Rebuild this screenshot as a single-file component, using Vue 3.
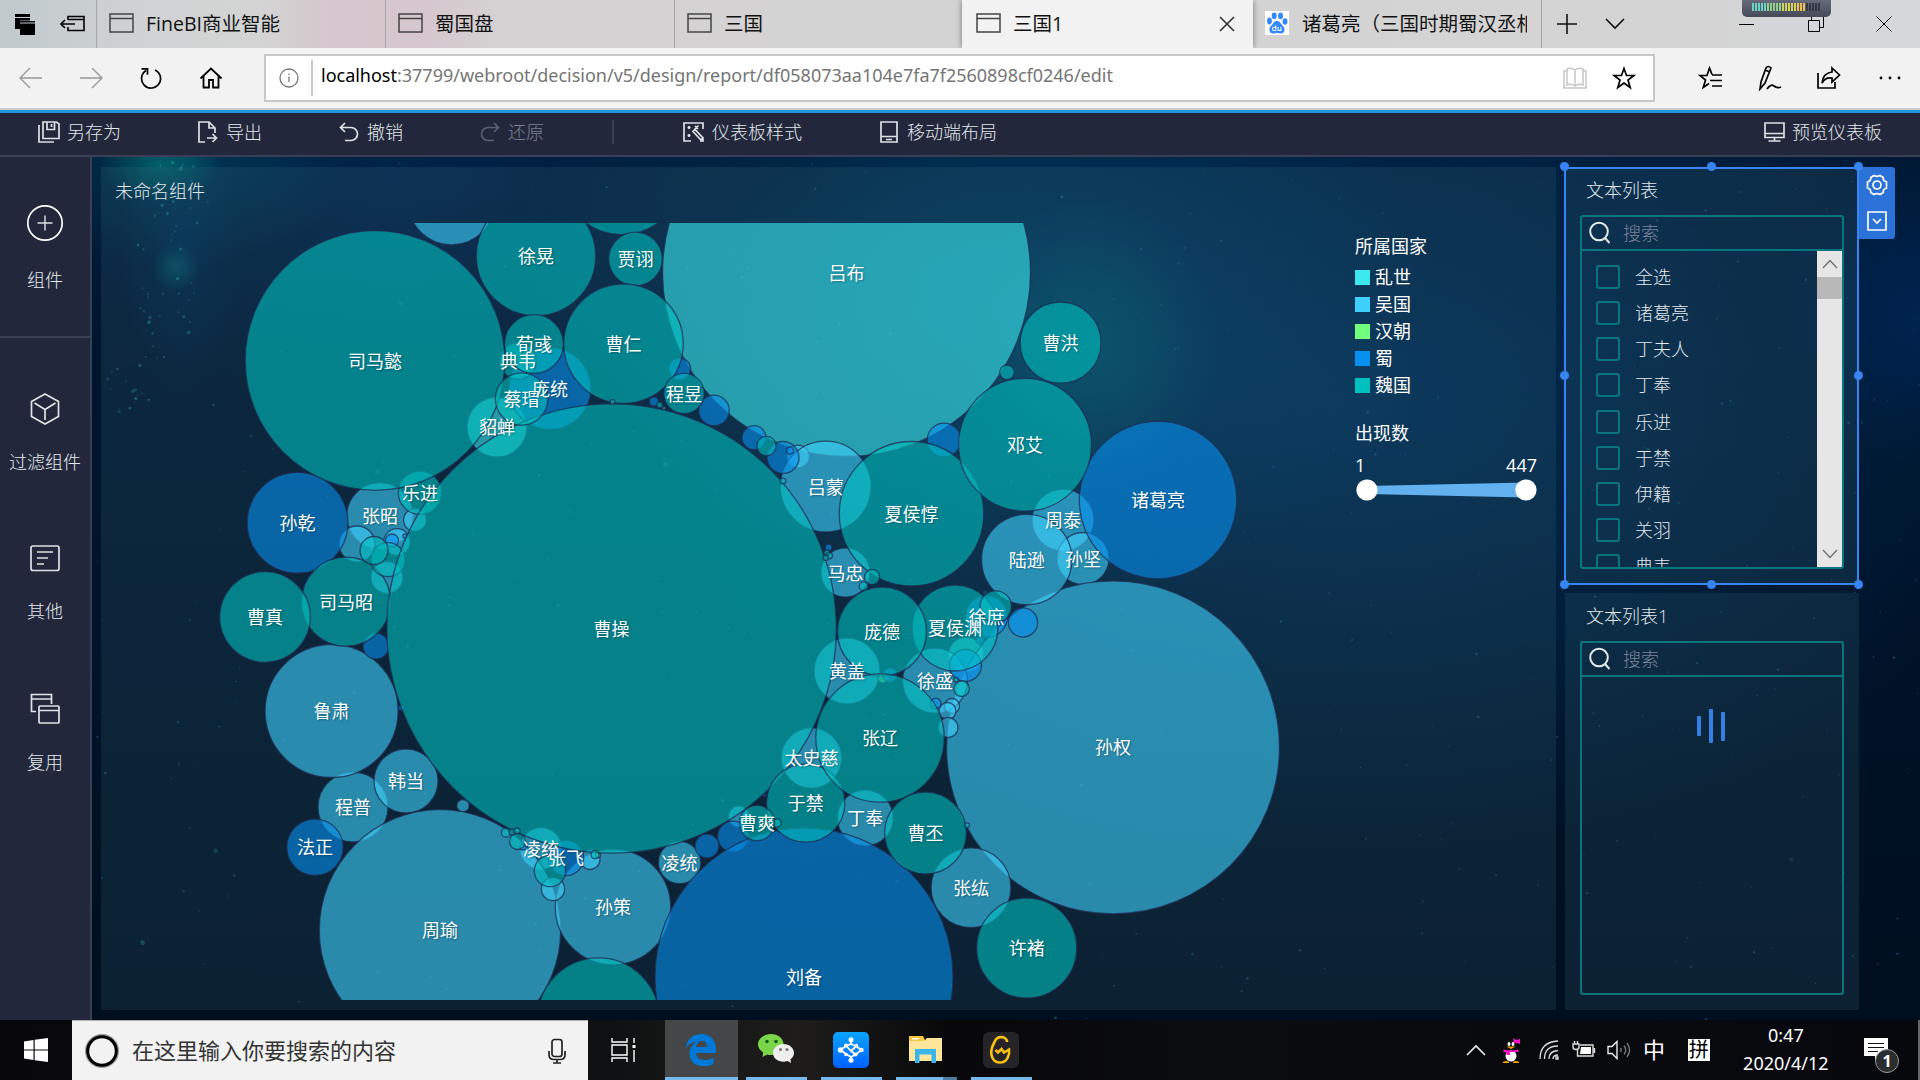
<script setup>
const tabs = [
  { title: 'FineBI商业智能', cls: 't1' },
  { title: '蜀国盘', cls: 't2' },
  { title: '三国', cls: 't3' },
]

const colors = {
  chaos: '#3ae8ee',
  wu: '#3dd0fc',
  han: '#73ff7e',
  shu: '#0790ee',
  wei: '#00bfbf',
}

const legend = [
  { name: '乱世', color: colors.chaos },
  { name: '吴国', color: colors.wu },
  { name: '汉朝', color: colors.han },
  { name: '蜀', color: colors.shu },
  { name: '魏国', color: colors.wei },
]

// [country, cx, cy, r, label]
const bubbles = [
  ['chaos', 846.5, 272.5, 184, '吕布'],
  ['chaos', 497, 427, 30, '貂蝉'],
  ['chaos', 966, 654.5, 17.5],
  ['wu', 451.5, 201.7, 43.3],
  ['wu', 380, 516, 33.3, '张昭'],
  ['wu', 415, 520, 11.4],
  ['wu', 357, 544, 18],
  ['wu', 397, 542, 13.3],
  ['wu', 387, 577.5, 16],
  ['wu', 353, 807, 35, '程普'],
  ['wu', 331.6, 711, 66.5, '鲁肃'],
  ['wu', 406, 781, 32, '韩当'],
  ['wu', 463, 805.7, 6.2],
  ['wu', 541, 848.5, 21, '凌统'],
  ['wu', 440, 930.3, 120.7, '周瑜'],
  ['wu', 613, 907, 57.7, '孙策'],
  ['wu', 553, 889, 11.6],
  ['wu', 590, 859.5, 10],
  ['wu', 798, 456.5, 11.3],
  ['wu', 825.7, 486.5, 45.4, '吕蒙'],
  ['wu', 1063, 520, 31, '周泰'],
  ['wu', 1083, 558.5, 26, '孙坚'],
  ['wu', 845.5, 572.5, 24.6, '马忠'],
  ['wu', 1113, 747.4, 166.5, '孙权'],
  ['wu', 1026.7, 559.5, 45.2, '陆逊'],
  ['wu', 847, 671, 33, '黄盖'],
  ['wu', 935, 680.7, 32.5, '徐盛'],
  ['wu', 952, 706, 7.5],
  ['wu', 947.5, 711, 8.5],
  ['wu', 948, 727.5, 10],
  ['wu', 811.4, 758, 30.2, '太史慈'],
  ['wu', 865.3, 818, 28, '丁奉'],
  ['wu', 971, 887.7, 39.9, '张纮'],
  ['wu', 739, 816.7, 10.8],
  ['wu', 679.6, 862.5, 21.2, '凌统'],
  ['wu', 664, 408, 1.5],
  ['han', 883, 678, 5],
  ['han', 598, 855, 2.5],
  ['shu', 550, 388.5, 41, '庞统'],
  ['shu', 297.5, 522.8, 50.4, '孙乾'],
  ['shu', 392, 540.5, 6.5],
  ['shu', 405, 536, 2],
  ['shu', 376, 646, 13],
  ['shu', 401, 708, 2.5],
  ['shu', 315, 847.3, 28.2, '法正'],
  ['shu', 566, 858, 17.6, '张飞'],
  ['shu', 523, 847, 3],
  ['shu', 1158, 500, 78.7, '诸葛亮'],
  ['shu', 783, 457.5, 16],
  ['shu', 790, 450.5, 3.6],
  ['shu', 754, 437.7, 12],
  ['shu', 714, 410.5, 15.3],
  ['shu', 679.6, 369, 11],
  ['shu', 654, 401.5, 4.5],
  ['shu', 944, 440, 16.8],
  ['shu', 828.6, 547.5, 3.4],
  ['shu', 986.5, 616.5, 21, '徐庶'],
  ['shu', 1023, 622.5, 14.6],
  ['shu', 965.5, 665.5, 16],
  ['shu', 890, 675, 7],
  ['shu', 935.7, 703.5, 5.4],
  ['shu', 980, 640, 4],
  ['shu', 733, 836.5, 15.4],
  ['shu', 707, 846, 11.9],
  ['shu', 804, 977, 149, '刘备'],
  ['shu', 764.5, 795, 1.5],
  ['wei', 518, 361, 18.2, '典韦'],
  ['wei', 420, 492.7, 21.7, '乐进'],
  ['wei', 375, 360.5, 129.8, '司马懿'],
  ['wei', 536, 256, 59.7, '徐晃'],
  ['wei', 622, 173.7, 61],
  ['wei', 635.5, 259, 26.8, '贾诩'],
  ['wei', 623.5, 343.7, 59.7, '曹仁'],
  ['wei', 534, 344, 29.4, '荀彧'],
  ['wei', 346, 601.7, 44.5, '司马昭'],
  ['wei', 265, 617, 45.3, '曹真'],
  ['wei', 388, 559.7, 17],
  ['wei', 374, 550.5, 14],
  ['wei', 611.6, 628.5, 224.7, '曹操'],
  ['wei', 521.6, 399, 26.2, '蔡瑁'],
  ['wei', 550, 871, 15.7],
  ['wei', 595, 854.6, 4],
  ['wei', 506, 832.7, 4.5],
  ['wei', 512, 832, 3],
  ['wei', 517, 831, 3],
  ['wei', 517.5, 841.5, 8],
  ['wei', 598.5, 1018.7, 60.8],
  ['wei', 612.6, 402, 2.4],
  ['wei', 766.5, 446, 9.7],
  ['wei', 684, 393.5, 20.2, '程昱'],
  ['wei', 659.6, 405, 3],
  ['wei', 783, 481, 2.8],
  ['wei', 827, 553, 3],
  ['wei', 829.5, 555.7, 3],
  ['wei', 825.7, 557.7, 2.7],
  ['wei', 1060.6, 342.7, 40.5, '曹洪'],
  ['wei', 1007, 372.3, 7.3],
  ['wei', 911.5, 513.7, 72.2, '夏侯惇'],
  ['wei', 1025, 444.7, 66.4, '邓艾'],
  ['wei', 872, 577, 7.6],
  ['wei', 863.6, 586.3, 4.4],
  ['wei', 955, 628, 43, '夏侯渊'],
  ['wei', 882, 631.5, 44.5, '庞德'],
  ['wei', 995.7, 606.5, 15.7],
  ['wei', 961.6, 688.7, 7.8],
  ['wei', 956, 679.7, 2.3],
  ['wei', 805.7, 803, 39.2, '于禁'],
  ['wei', 880, 738, 64.2, '张辽'],
  ['wei', 925.5, 833, 40.9, '曹丕'],
  ['wei', 967, 825.3, 2.5],
  ['wei', 1026.7, 948, 50, '许褚'],
  ['wei', 777, 823, 4.2],
  ['wei', 757, 823, 17.6, '曹爽'],
].map(([country, x, y, r, label]) => ({ color: colors[country], x, y, r, label }))

const options = ['全选', '诸葛亮', '丁夫人', '丁奉', '乐进', '于禁', '伊籍', '关羽', '典韦']
const grips = [
  [0, 0], [50, 0], [100, 0], [0, 50], [100, 50], [0, 100], [50, 100], [100, 100],
]

// Deterministic star field
let seed = 20200412
const rnd = () => {
  seed = (seed * 1103515245 + 12345) % 2147483648
  return seed / 2147483648
}
const stars = Array.from({ length: 420 }, () => {
  const x = rnd() * 1828
  const y = rnd() * 863
  const s = rnd()
  return { x, y, r: s > 0.98 ? 2.4 : 0.6 + s * 0.8, o: 0.12 + rnd() * 0.32, c: rnd() > 0.45 ? '#1e9a9a' : '#2a72b8' }
})
const plume = Array.from({ length: 60 }, () => {
  const t = rnd()
  return { x: 74 + (rnd() - 0.5) * 60 + (t < 0.25 ? 16 : 0) - (t > 0.7 ? 30 : 0), y: t * 270, r: 0.7 + rnd() * 1.2, o: 0.2 + rnd() * 0.35 }
})
</script>

<template>
  <div class="screen">
    <header class="tabbar">
      <div class="tabtools">
        <svg width="22" height="22" viewBox="0 0 22 22"><path d="M1 1h15v3H1zM1 5h15v2.500H6V16H1zM6 8h15v1.500H6zM6 10.500h15V22H6z" /></svg>
        <svg width="26" height="18" viewBox="0 0 26 18" fill="none" stroke="#000" stroke-width="1.600"><path d="M8 5V1.500h16v14H8V12M8 4.500h16M1 9h14M5 5L1 9l4 4" /></svg>
      </div>
      <div v-for="t in tabs" :key="t.title" class="tab" :class="t.cls">
        <svg width="25" height="20" viewBox="0 0 25 20" fill="none" stroke="#444" stroke-width="1.500"><path d="M1 1h23v18H1zM1 5.500h23" /></svg>
        <span>{{ t.title }}</span>
      </div>
      <div class="tab active">
        <svg width="25" height="20" viewBox="0 0 25 20" fill="none" stroke="#444" stroke-width="1.500"><path d="M1 1h23v18H1zM1 5.500h23" /></svg>
        <span>三国1</span>
        <svg class="close" width="16" height="16" viewBox="0 0 16 16" fill="none" stroke="#333" stroke-width="1.600"><path d="M1 1l14 14M15 1L1 15" /></svg>
      </div>
      <div class="tab last">
        <svg width="24" height="24" viewBox="0 0 24 24"><path fill="#fff" d="M0 0h24v24H0z" /><g fill="#3388ff"><ellipse cx="4.500" cy="10" rx="2.500" ry="3.400" /><ellipse cx="9.200" cy="4.800" rx="2.500" ry="3.400" /><ellipse cx="15.500" cy="4.800" rx="2.500" ry="3.400" /><ellipse cx="20" cy="10.500" rx="2.500" ry="3.300" /><path d="M12 10c3 0 3.500 2.500 6 5 2.800 3 1.500 7.500-2 7.500-1.500 0-2.500-.5-4-.5s-2.500.5-4 .5c-3.500 0-5-4.500-2-7.500 2.500-2.500 3-5 6-5z" /></g><path d="M10.800 14.500v5H9a1.600 1.600 0 0 1 0-3.200h1.800M13 16v2.500q0 1 1 1h2V16" fill="none" stroke="#fff" stroke-width="1.100" /></svg>
        <span>诸葛亮（三国时期蜀汉丞相</span>
      </div>
      <svg class="wplus" width="20" height="20" viewBox="0 0 20 20" stroke="#111" stroke-width="1.600"><path d="M10 0v20M0 10h20" /></svg>
      <svg class="wchev" width="20" height="12" viewBox="0 0 20 12" fill="none" stroke="#111" stroke-width="1.600"><path d="M1 1l9 9 9-9" /></svg>
      <svg class="wmin" width="16" height="16" viewBox="0 0 16 16" stroke="#000"><path d="M0 8.500h15" /></svg>
      <svg class="wmax" width="16" height="16" viewBox="0 0 16 16" fill="none" stroke="#000"><path d="M.5 4.500h11v11H.5zM3.500 4V.5h12v11H12" /></svg>
      <svg class="wclose" width="16" height="16" viewBox="0 0 16 16" stroke="#000"><path d="M.5.5l15 15M15.500.5l-15 15" /></svg>
      <div class="meter"><i v-for="n in 23" :key="n" :class="{ off: n > 18 }" /></div>
    </header>

    <div class="navbar">
      <svg width="24" height="22" viewBox="0 0 24 22" fill="none" stroke="#999" stroke-width="1.400"><path d="M23 11H1M11 1L1 11l10 10" /></svg>
      <svg width="24" height="22" viewBox="0 0 24 22" fill="none" stroke="#999" stroke-width="1.400"><path d="M1 11h22M13 1l10 10-10 10" /></svg>
      <svg width="24" height="22" viewBox="0 0 24 22" fill="none" stroke="#000" stroke-width="1.700"><path d="M7 3.500a9.500 9.500 0 1 0 9 -.6M2.500 1.800h6v6" /></svg>
      <svg width="24" height="22" viewBox="0 0 24 22" fill="none" stroke="#000" stroke-width="1.800"><path d="M1.500 11.500L12 1.500l10.500 10M4.500 9v11.500H10V13h4v7.500h5.500V9" /></svg>
      <div class="address">
        <svg width="20" height="20" viewBox="0 0 20 20" fill="none" stroke="#777" stroke-width="1.300"><circle cx="10" cy="10" r="9" /><path d="M10 8.500V14M10 5.500v1.600" /></svg>
        <i class="bar" />
        <span class="url"><b>localhost</b>:37799/webroot/decision/v5/design/report/df058073aa104e7fa7f2560898cf0246/edit</span>
        <svg width="24" height="22" viewBox="0 0 24 22" fill="none" stroke="#c6c6c6" stroke-width="1.500"><path d="M12 3q-4-3-8-1v16q4-2 8 1 4-3 8-1V2q-4-2-8 1v16M4 4H1v17h22V4h-3" /></svg>
        <svg width="24" height="24" viewBox="0 0 24 24" fill="none" stroke="#000" stroke-width="1.700"><path d="M12 2.500l2.500 7H22l-6 4.500 2.200 7.500L12 17l-6.200 4.500L8 14 2 9.500h7.500z" /></svg>
      </div>
      <div class="navright">
        <svg width="26" height="24" viewBox="0 0 26 24" fill="none" stroke="#000" stroke-width="1.700"><path d="M14 8.500l-2.500-6.500L9 9.500H2L7.500 14l-2.200 7.500L11 17.500M14 9h10M12 14.500h12M14 20h10" /></svg>
        <svg width="26" height="26" viewBox="0 0 26 26" fill="none" stroke="#000" stroke-width="1.700"><path d="M3 24L4 17 9 3q2-3 5 0L8 18zM8 5l5 2M3 24l5-6M10 24q4-5.500 7-3t7 1" /></svg>
        <svg width="26" height="24" viewBox="0 0 26 24" fill="none" stroke="#000" stroke-width="1.700"><path d="M2 7v15h17v-6M16 2l7.500 7L16 16v-4Q9 11 6 17 7 7 16 6z" /></svg>
        <svg width="24" height="4" viewBox="0 0 24 4"><circle cx="3" cy="2" r="1.400" /><circle cx="12" cy="2" r="1.400" /><circle cx="21" cy="2" r="1.400" /></svg>
      </div>
    </div>

    <div class="toolbar">
      <div class="tool a1"><svg width="22" height="22" viewBox="0 0 22 22"><path d="M5 1h13.500l2.500 2v14.500H5zM9 1v7.500h7.500V1M13.500 3v3M1 4v17h15" /></svg>另存为</div>
      <div class="tool a2"><svg width="20" height="22" viewBox="0 0 20 22"><path d="M7 21H1V1h10l6 6v5M11 1v6h6M9 17h9M14.500 13l4 4-4 4" /></svg>导出</div>
      <div class="tool a3"><svg width="20" height="20" viewBox="0 0 20 20"><path d="M6 1L1.500 5.500 6 10M2 5.500h10a6.500 6.500 0 0 1 0 13H6" /></svg>撤销</div>
      <div class="tool a4 off"><svg width="20" height="20" viewBox="0 0 20 20"><path d="M14 1l4.500 4.500L14 10M18 5.500H8a6.500 6.500 0 0 0 0 13h6" /></svg>还原</div>
      <i class="vsep" />
      <div class="tool a5"><svg width="21" height="20" viewBox="0 0 21 20"><path d="M8 19H1V1h19v6M20 17v2h-3M10 9.500l8 8.500 2-2-8-8.500zM4.500 5.500h3M6 4v3M12 4l3 3M15.500 3.500l-4 4M4.500 13.500h3M6 12v3" /></svg>仪表板样式</div>
      <div class="tool a6"><svg width="18" height="22" viewBox="0 0 18 22"><path d="M1 1h16v20H1zM1 15.500h16M6 18.500h6" /></svg>移动端布局</div>
      <div class="tool a7"><svg width="21" height="20" viewBox="0 0 21 20"><path d="M1 1h19v14.500H1zM1 11.500h19M10.500 15.500v3M4.500 19h12" /></svg>预览仪表板</div>
    </div>

    <div class="body">
      <nav class="side">
        <div class="sitem first">
          <svg width="40" height="40" viewBox="0 0 40 40"><circle cx="20" cy="20" r="17.200" stroke="#fff" /><path d="M20 12.500v15M12.500 20h15" stroke-width="1.400" /></svg>
          <span>组件</span>
        </div>
        <div class="sitem s2">
          <svg width="40" height="40" viewBox="0 0 40 40"><path d="M20 5l13.500 7.500v15L20 35 6.500 27.500v-15zM9.500 14L20 20.500 30.500 14M20 20.500V31" /></svg>
          <span>过滤组件</span>
        </div>
        <div class="sitem s3">
          <svg width="40" height="40" viewBox="0 0 40 40"><rect x="6" y="8" width="28" height="24.500" rx="2" /><path d="M12 14h16M12 20h11M12 26h7" /></svg>
          <span>其他</span>
        </div>
        <div class="sitem s4">
          <svg width="40" height="40" viewBox="0 0 40 40"><rect x="14" y="17" width="20" height="17" rx="1" /><path d="M14 21.500h20M11 22.500H6.500v-17h20V15M6.500 10h20" /></svg>
          <span>复用</span>
        </div>
      </nav>

      <main class="canvas">
        <svg class="sky" viewBox="0 0 1828 863" width="1828" height="863">
          <circle v-for="(s, i) in stars" :key="i" :cx="s.x" :cy="s.y" :r="s.r" :fill="s.c" :opacity="s.o" />
          <circle v-for="(s, i) in plume" :key="'p' + i" :cx="s.x" :cy="s.y" :r="s.r" fill="#1c9c88" :opacity="s.o" />
        </svg>
        <section class="panel chart">
          <h3>未命名组件</h3>
          <div class="chartbody">
            <svg class="plot" viewBox="101 223 1200 777" width="1200" height="777">
              <circle v-for="(b, i) in bubbles" :key="i" :cx="b.x" :cy="b.y" :r="b.r" :fill="b.color" fill-opacity=".6" stroke="#1d2c50" stroke-opacity=".75" stroke-width="1.300" />
              <g class="names">
                <template v-for="(b, i) in bubbles" :key="'n' + i">
                  <text v-if="b.label" :x="b.x" :y="b.y + 7">{{ b.label }}</text>
                </template>
              </g>
            </svg>
            <aside class="legend">
              <div class="ltitle">所属国家</div>
              <div v-for="l in legend" :key="l.name" class="lrow"><i :style="{ background: l.color }" />{{ l.name }}</div>
              <div class="ltitle second">出现数</div>
              <div class="range"><span>1</span><span>447</span></div>
              <svg width="184" height="24" viewBox="0 0 184 24"><path d="M12 8l160-3.500v15L12 16z" fill="#64b1f0" /><circle cx="12" cy="12" r="10.600" fill="#fff" /><circle cx="171" cy="12" r="10.600" fill="#fff" /></svg>
            </aside>
          </div>
        </section>

        <div class="lists">
          <section class="panel list selected">
            <h3>文本列表</h3>
            <div class="box">
              <div class="search">
                <svg width="22" height="24" viewBox="0 0 22 24" fill="none" stroke="#e3e8e8" stroke-width="2"><circle cx="10" cy="10.500" r="8.800" /><path d="M15.500 16.500l5 5.500" /></svg><span>搜索</span>
              </div>
              <div class="rows">
                <div class="opts">
                  <div v-for="o in options" :key="o" class="opt"><i /><span>{{ o }}</span></div>
                </div>
                <div class="scroll">
                  <svg width="16" height="10" viewBox="0 0 16 10"><path d="M1 9l7-7.500L15 9" /></svg>
                  <b />
                  <svg class="down" width="16" height="10" viewBox="0 0 16 10"><path d="M1 1l7 7.500L15 1" /></svg>
                </div>
              </div>
            </div>
            <i v-for="(g, i) in grips" :key="i" class="grip" :style="{ left: g[0] + '%', top: g[1] + '%' }" />
            <div class="actions">
              <svg width="22" height="22" viewBox="0 0 22 22"><path d="M8 1.500q3 1.800 6 0l3.200 2q-.2 3.500 3.300 4.500v6q-3.500 1-3.300 4.500l-3.200 2q-3-1.800-6 0l-3.200-2Q5 15 1.500 14V8Q5 7 4.800 3.500z" /><circle cx="11" cy="11" r="4" /></svg>
              <svg width="20" height="20" viewBox="0 0 20 20"><path d="M1 1h18v18H1zM6 8l4 4 4-4" /></svg>
            </div>
          </section>
          <section class="panel list">
            <h3>文本列表1</h3>
            <div class="box">
              <div class="search">
                <svg width="22" height="24" viewBox="0 0 22 24" fill="none" stroke="#e3e8e8" stroke-width="2"><circle cx="10" cy="10.500" r="8.800" /><path d="M15.500 16.500l5 5.500" /></svg><span>搜索</span>
              </div>
              <div class="loading"><i class="l1" /><i class="l2" /><i class="l3" /></div>
            </div>
          </section>
        </div>
      </main>
    </div>

    <footer class="taskbar">
      <div class="start"><svg width="24" height="24" viewBox="0 0 24 24" fill="#fff"><path d="M0 3.500l9.500-1.500v9.500H0zM10.700 1.800L24 0v11.500H10.700zM0 12.500h9.500V22L0 20.500zM10.700 12.500H24V24l-13.300-1.800z" /></svg></div>
      <div class="find">
        <svg width="36" height="36" viewBox="0 0 36 36" fill="none"><circle cx="18" cy="18" r="15.800" stroke="#999" stroke-width="2.500" /><circle cx="18" cy="18" r="14.300" stroke="#000" stroke-width="3" /></svg>
        <span>在这里输入你要搜索的内容</span>
        <svg class="mic" width="18" height="26" viewBox="0 0 18 26" fill="none" stroke="#222" stroke-width="1.700"><rect x="4" y="1.500" width="10" height="17" rx="2.500" /><path d="M1 13v4q0 4.500 5 4.500h6q5 0 5-4.500v-4M9 21.500V25M5 25h8" /></svg>
      </div>
      <svg class="tv" width="26" height="24" viewBox="0 0 26 24" fill="none" stroke="#fff" stroke-width="1.400"><path d="M1 0v4h15V0M1 7h15v10H1zM1 24v-4h15v4M23 0v5M23 12v12" /><path d="M21.500 7h3v3h-3z" fill="#fff" stroke="none" /></svg>
      <div class="app edge"><svg width="32" height="34" viewBox="0 0 32 34"><path fill="#0078d7" d="M1 15C2 6 8 1 16.500 1 26 1 31 8 31 16v4H11c.5 5 4 7 9 7 3.500 0 6-1 8.500-2.500V31c-3 1.600-6 2.300-10 2.300C10 33.300 4.500 28 4.500 20.500c0-5.500 3-9.500 7.500-12C6.500 9.500 3 11.500 1 15zM11.200 14H22c0-4-2-6-5.200-6-3 0-5.100 2.500-5.600 6z" /></svg></div>
      <div class="app"><svg width="36" height="34" viewBox="0 0 36 34"><path fill="#7bd54a" d="M13 1c7 0 12.500 4.500 12.500 10.500S20 22 13 22c-1.500 0-3-.2-4-.6L4.500 24l.7-4.500C2.400 17.600 0 15 0 11.500 0 5.500 6 1 13 1z" /><circle cx="9" cy="8.500" r="1.800" fill="#176017" /><circle cx="18" cy="8.500" r="1.800" fill="#176017" /><path fill="#eee" d="M25.500 11C31.500 11 36 15 36 20c0 2.500-1.500 5-3.500 6.300l.5 3.700-3.300-1.900c-1.300.5-2.700.7-4.200.7-6 0-10.500-4-10.500-8.800s4.500-9 10.500-9z" /><circle cx="22.500" cy="16.500" r="1.500" fill="#777" /><circle cx="29" cy="16.500" r="1.500" fill="#777" /></svg></div>
      <div class="app"><svg width="36" height="36" viewBox="0 0 36 36"><defs><linearGradient id="ding" x2="0" y2="1"><stop stop-color="#0aa5ff" /><stop offset="1" stop-color="#0060ff" /></linearGradient></defs><rect width="36" height="36" rx="5" fill="url(#ding)" /><path d="M17.500 8l.5 4-5 2-5.500 4 5.500 4 5 3v3M18 12l5.500 2.500L28.500 18l-6 4.500-4.500 2.500M13 13.500l5 5.500 4.500 3.500M23.500 14l-5.500 5" fill="none" stroke="#fff" stroke-width="1.800" /><g fill="#fff"><circle cx="18" cy="7.800" r="2.500" /><circle cx="7.500" cy="18" r="2.700" /><circle cx="28.500" cy="18" r="2.200" /><circle cx="18" cy="28.200" r="2.500" /><circle cx="13" cy="13.500" r="2" /><circle cx="23.500" cy="13.500" r="1.700" /><circle cx="22.500" cy="22.500" r="2.100" /><circle cx="13" cy="22.500" r="1.800" /></g></svg></div>
      <div class="app folder"><svg width="34" height="28" viewBox="0 0 34 28"><path fill="#f9c83c" d="M0 0h14l2 4v4H0z" /><path fill="#fff" d="M3 2h7v1.500H3z" /><path fill="#ffe69a" d="M0 5h15l3-3h15v23H0z" /><path fill="#3cb4ec" d="M6 13h21v14h-4.500v-8.500h-12V27H6z" /></svg></div>
      <div class="app"><svg width="36" height="36" viewBox="0 0 36 36"><rect width="36" height="36" rx="6" fill="#262427" /><path d="M24 10c0-6-10-7-12.500 0C7.500 17 7.500 22 9.500 26c3 6 12 6 15 0 1.700-3 2-5.500 1.500-8.500l-5 3-2.500-3.500L15 20.500l-2.500-2.500" fill="none" stroke="#f9c013" stroke-width="2.600" /></svg></div>
      <div class="tray">
        <svg width="20" height="12" viewBox="0 0 20 12" fill="none" stroke="#eee" stroke-width="1.600"><path d="M1 11l9-9 9 9" /></svg>
        <svg width="20" height="25" viewBox="0 0 20 25"><path d="M10 2c5 0 6 4 6 7 2 3 3 6 2 10H2c-1-4 0-7 2-10 0-3 1-7 6-7z" fill="#111" /><ellipse cx="10" cy="18" rx="5.500" ry="5.500" fill="#fff" /><ellipse cx="8" cy="6" rx="1.400" ry="2" fill="#fff" /><ellipse cx="12" cy="6" rx="1.400" ry="2" fill="#fff" /><path d="M5.500 8.500h9L10 11z" fill="#f5a000" /><path d="M2.500 11.500q7.500 2 15 0v2.500H9v3H5.500v-3h-3zM12 0l3 2 4-1v5l-3-1-3 0z" fill="#ff10d0" /><path d="M2 24q3-2 6 0v1H2zM12 24q3-2 6 0v1h-6z" fill="#f5a000" /></svg>
        <svg width="20" height="20" viewBox="0 0 20 20" fill="none" stroke="#ddd" stroke-width="1.300"><path d="M1 19Q1 2 19 1M5.500 19q0-13 13.500-13M10 19q0-8 9-8.500" /><path d="M14 19q0-4 5-4M17 17h2v2h-2z" /></svg>
        <svg width="24" height="18" viewBox="0 0 24 18" fill="none" stroke="#ddd" stroke-width="1.400"><path d="M8 4h13v11H5.500V9M22.500 7v5M1 3h6v3q0 2.500-3 2.500T1 6zM2.500 0v3M5.500 0v3" /><path d="M9 6h10v7H8z" fill="#fff" stroke="none" /></svg>
        <svg width="24" height="20" viewBox="0 0 24 20" fill="none" stroke="#eee" stroke-width="1.400"><path d="M1 6.500h4l5-5v17l-5-5H1z" /><path d="M13.500 8q1.500 2 0 4M17 5.500q3.500 4.500 0 9M20 3q5 7 0 14" stroke="#777" /></svg>
        <span class="zh">中</span>
        <span class="pin">拼</span>
        <div class="clock"><span>0:47</span><span>2020/4/12</span></div>
        <div class="note">
          <svg width="24" height="24" viewBox="0 0 24 24"><path d="M0 0h24v18H16l-5 5.500V18H0z" fill="#fff" /><path d="M4 5.500h16M4 9.500h16M4 13.500h10" stroke="#111" stroke-width="1.200" /></svg>
          <b>1</b>
        </div>
      </div>
    </footer>
  </div>
</template>

<style>
body { margin: 0; background: #000; }
</style>

<style scoped>
.screen { width: 1920px; height: 1080px; overflow: hidden; display: flex; flex-direction: column; font-family: "Open Sans", "Noto Sans CJK SC", sans-serif; font-size: 18px; font-weight: 300; color: #e3e8ea; }
.screen * { box-sizing: border-box; }
svg { flex: none; display: block; }
i, b { font-style: normal; }

.tabbar { position: relative; height: 48px; flex: none; display: flex; align-items: center; color: #111; font-size: 19.500px; font-weight: 400; background: linear-gradient(90deg, #bfc9cd 0, #cfd2d3 130px, #d4d4d4 260px, #d5c7cd 330px, #d6c6cd 420px, #d4d2d3 500px, #d4d4d4 1700px, #d5d8db); }
.tabtools { width: 96px; display: flex; align-items: center; gap: 24px; padding-left: 14px; }
.tab { height: 48px; width: 289px; flex: none; border-left: 1px solid #a5a5a5; display: flex; align-items: center; padding: 0 0 0 12px; gap: 12px; overflow: hidden; white-space: nowrap; line-height: 48px; }
.tab svg { margin-top: -2px; }
.active { background: #f2f2f2; border: 0; width: 291px; padding-left: 14px; box-shadow: 0 0 6px rgba(0, 0, 0, .45); clip-path: inset(0 -8px); overflow: visible; }
.t3 { width: 288px; }
.active .close { margin-left: auto; margin-right: 18px; margin-top: 0; }
.last { border-left: 0; border-right: 1px solid #a5a5a5; padding: 0 14px 0 12px; gap: 13px; }
.last span { overflow: hidden; }
.wplus { margin-left: 15px; }
.wchev { margin-left: 28px; }
.wmin { margin-left: 114px; }
.wmax { margin-left: 53px; }
.wclose { margin-left: 52px; }
.meter { position: absolute; left: 1742px; top: 0; width: 89px; height: 17px; border-radius: 0 0 5px 5px; background: linear-gradient(#656b7c, #454a58); display: flex; gap: 1px; padding: 3px 10px 4px; }
.meter i { width: 2px; height: 8px; background: #6bd3c3; }
.meter i:nth-child(n+6) { background: #8fd08a; }
.meter i:nth-child(n+11) { background: #d4d05c; }
.meter i:nth-child(n+16) { background: #eebb50; }
.meter i.off { background: #343846; }

.navbar { height: 62px; flex: none; background: #f2f2f2; border-bottom: 2px solid #c9cccd; display: flex; align-items: center; padding-left: 19px; gap: 36px; }
.address { width: 1391px; height: 48px; margin-left: 5px; margin-right: 7px; border: 2px solid #c8c8c8; background: #fff; display: flex; align-items: center; padding: 0 17px 0 13px; }
.bar { width: 2px; height: 36px; background: #c8c8c8; margin: 0 8px 0 12px; }
.url { flex: 1; font-family: "Noto Sans", "Open Sans", sans-serif; font-weight: 400; font-size: 18px; color: #757575; letter-spacing: -.01px; position: relative; top: -3px; white-space: nowrap; }
.url b { font-weight: 400; color: #000; }
.address svg:last-child { margin-left: 25px; }
.navright { display: flex; align-items: center; gap: 33px; }
.navright svg:last-child { margin-left: 3px; }

.toolbar { height: 47px; flex: none; background: #22273c; border-top: 3px solid #2196dc; border-bottom: 2px solid #3a3f56; display: flex; align-items: center; padding-bottom: 4px; }
.tool { display: flex; align-items: center; gap: 7px; line-height: 24px; white-space: nowrap; }
.tool svg { fill: none; stroke: #dde2e2; stroke-width: 1.700; }
.off { color: #7b8093; }
.off svg { stroke: #5a6074; }
.a1 { margin-left: 38px; }
.a2 { margin-left: 77px; gap: 8px; }
.a3 { margin-left: 77px; gap: 8px; }
.a4 { margin-left: 77px; gap: 8px; }
.vsep { width: 2px; height: 24px; background: #3a3f56; margin-left: 68px; }
.a5 { margin-left: 69px; gap: 8px; }
.a6 { margin-left: 78px; gap: 9px; }
.a7 { margin-left: auto; margin-right: 38px; }

.body { flex: 1; min-height: 0; display: flex; }
.side { width: 92px; background: #22273c; border-right: 2px solid #3a3f56; display: flex; flex-direction: column; flex: none; }
.sitem { display: flex; flex-direction: column; align-items: center; gap: 21px; line-height: 24px; white-space: nowrap; }
.sitem svg { fill: none; stroke: #dfe4e2; stroke-width: 1.700; }
.first { height: 181px; padding-top: 46px; gap: 25px; border-bottom: 2px solid #3a3f56; }
.s2 { margin-top: 51px; }
.s3 { margin-top: 64px; }
.s4 { margin-top: 66px; }

.canvas { position: relative; flex: 1; display: flex; gap: 9px; padding: 10px 0 10px 9px; align-items: stretch; background:
  radial-gradient(ellipse 60px 38px at 68px 8px, rgba(0, 130, 125, .55), transparent),
  radial-gradient(ellipse 170px 110px at 90px 0, rgba(0, 90, 110, .4), transparent),
  radial-gradient(ellipse 24px 24px at 84px 110px, rgba(0, 130, 130, .4), transparent),
  radial-gradient(ellipse 60px 150px at 90px 90px, rgba(0, 60, 110, .3), transparent),
  radial-gradient(ellipse 130px 150px at 1000px 190px, rgba(0, 125, 125, .36), transparent),
  radial-gradient(ellipse 460px 330px at 880px 140px, rgba(0, 80, 120, .5), transparent),
  radial-gradient(ellipse 700px 450px at 1260px 250px, rgba(0, 60, 110, .6), transparent),
  radial-gradient(ellipse 160px 150px at 1840px 160px, rgba(0, 60, 150, .3), transparent),
  radial-gradient(ellipse 420px 220px at 300px 20px, rgba(0, 50, 100, .45), transparent),
  linear-gradient(#001834, #001328 50%, #000f20); }
.sky { position: absolute; left: 0; top: 0; }
.panel { position: relative; background: rgba(60, 110, 130, .2); }
.panel h3 { margin: 0; font-size: 18px; font-weight: 300; line-height: 24px; }
.chart { width: 1455px; flex: none; display: flex; flex-direction: column; }
.chart h3 { padding: 12px 0 0 14px; height: 56px; }
.chartbody { display: flex; }
.names text { fill: #fff; font-size: 18px; font-weight: 400; text-anchor: middle; text-shadow: 1px 1px 2px rgba(0, 40, 60, .4); }
.legend { margin-left: 54px; padding-top: 11px; color: #fff; width: 184px; font-weight: 400; }
.ltitle { line-height: 24px; margin-bottom: 6px; }
.lrow { display: flex; align-items: center; gap: 5px; height: 27px; line-height: 27px; }
.lrow i { width: 15px; height: 15px; }
.second { margin: 22px 0 0; }
.range { display: flex; justify-content: space-between; line-height: 24px; padding: 0 2px 0 0; margin: 8px 0 1px; }

.lists { display: flex; flex-direction: column; gap: 8px; width: 294px; }
.list { height: 418px; padding: 48px 15px 0; }
.list h3 { position: absolute; left: 21px; top: 11px; }
.list + .list { height: 417px; }
.selected::after { content: ""; position: absolute; inset: 0 0 0 -1px; border: 2px solid #3685f2; pointer-events: none; }
.box { height: 354px; border: 2px solid #08757f; border-radius: 3px; display: flex; flex-direction: column; overflow: hidden; }
.search { height: 34px; flex: none; border-bottom: 2px solid #08757f; display: flex; align-items: center; padding-left: 7px; gap: 12px; color: #7f8398; }
.search span, .opt span { position: relative; top: -1px; }
.rows { flex: 1; min-height: 0; display: flex; }
.opts { flex: 1; padding: 8px 0 0 14px; overflow: hidden; }
.opt { height: 36.150px; display: flex; align-items: center; gap: 15px; }
.opt i { width: 24px; height: 24px; border: 2px solid #08757f; border-radius: 3px; }
.scroll { width: 25px; background: #e6e6e6; display: flex; flex-direction: column; align-items: center; padding: 8px 0; }
.scroll svg { fill: none; stroke: #707070; stroke-width: 1.300; }
.scroll b { width: 25px; height: 22px; background: #b8b8b8; margin-top: 8px; }
.scroll .down { margin-top: auto; }
.grip { position: absolute; width: 9px; height: 9px; border-radius: 50%; background: #3685f2; margin: -5px 0 0 -5px; z-index: 2; }
.actions { position: absolute; left: 294px; top: 0; width: 36px; height: 72px; border-radius: 0 3px 3px 0; background: #2a72d8; display: flex; flex-direction: column; align-items: center; gap: 15px; padding-top: 7px; }
.actions svg { fill: none; stroke: #fff; stroke-width: 1.700; }
.loading { display: flex; justify-content: center; align-items: center; gap: 8px; height: 34px; margin-top: 32px; padding-right: 2px; }
.loading i { width: 4px; border-radius: 1px; background: #3580e6; }
.l1 { height: 20px; }
.l2 { height: 34px; }
.l3 { height: 29px; }

.taskbar { height: 60px; flex: none; background: linear-gradient(90deg, #08080c, #101112 620px, #1e1d1c 800px, #08080a 950px, #0b0c10 1200px, #07080d); display: flex; align-items: center; }
.start { width: 72px; padding-left: 24px; }
.find { width: 516px; height: 60px; background: #f2f2f2; border-top: 1px solid #b5b0b0; display: flex; align-items: center; padding: 0 22px 0 12px; color: #333; font-size: 22px; font-weight: 400; }
.find span { margin-left: 12px; white-space: nowrap; position: relative; top: -2px; }
.mic { margin-left: auto; }
.tv { margin-left: 23px; margin-right: 28px; }
.app { position: relative; width: 61px; height: 60px; margin-right: 14px; display: flex; align-items: center; justify-content: center; border-bottom: 3px solid #76b9ed; padding: 3px 1px 0 0; }
.edge { width: 73px; margin-right: 8px; padding-right: 2px; background: #454648; }
.folder::after { content: ""; position: absolute; right: 0; bottom: -3px; width: 14px; height: 3px; background: #4b7da5; }
.tray { margin-left: auto; height: 60px; display: flex; align-items: center; width: 454px; color: #fff; font-weight: 400; }
.tray svg + svg { margin-left: 15px; }
.tray svg:nth-child(3) { margin-left: 18px; }
.tray svg:nth-child(4) { margin-left: 13px; }
.tray svg:nth-child(5) { margin-left: 11px; }
.zh { font-size: 22px; line-height: 26px; margin-left: 12px; position: relative; top: -1px; }
.pin { margin-left: 23px; width: 22px; height: 22px; background: #fff; color: #000; font-size: 20px; line-height: 21px; text-align: center; }
.clock { width: 110px; margin-left: 22px; display: flex; flex-direction: column; align-items: center; font-size: 18px; line-height: 28px; font-family: "Noto Sans", sans-serif; position: relative; top: -1px; }
.note { position: relative; margin-left: 24px; padding-right: 30px; border-right: 2px solid #666; height: 60px; padding-top: 18px; }
.note b { position: absolute; left: 11px; top: 29px; width: 24px; height: 24px; border-radius: 50%; border: 1px solid #999; background: #2c2d31; font-size: 16px; line-height: 22px; text-align: center; font-weight: 700; }
</style>
